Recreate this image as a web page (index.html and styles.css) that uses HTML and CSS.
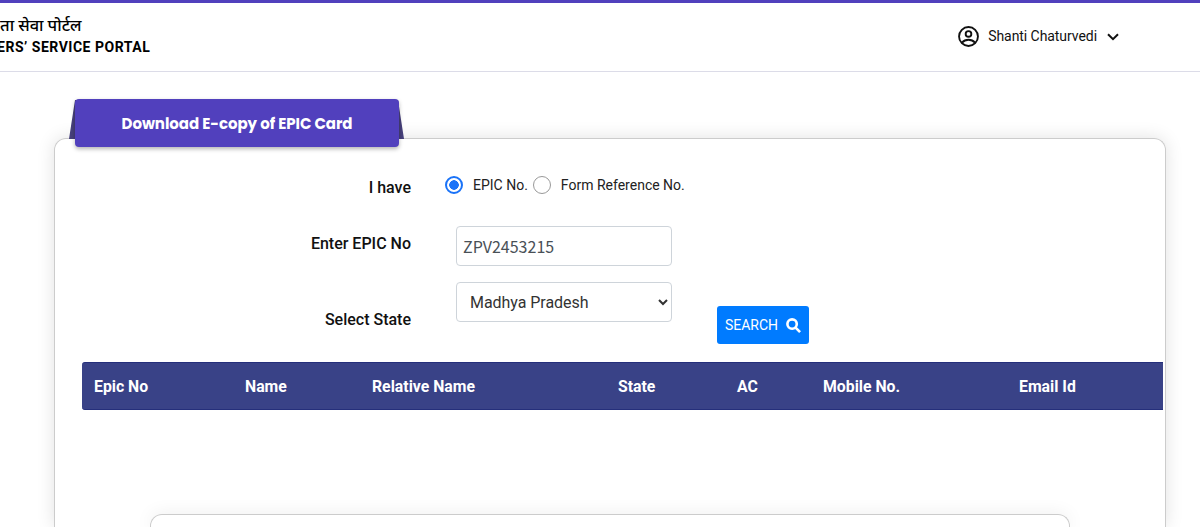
FILE: index.html
```
<!DOCTYPE html>
<html lang="en">
    <head>
        <meta charset="utf-8">
        <title>Voters' Service Portal</title>

        <link rel="stylesheet" href="styles.css">
    </head>

    <body>
        <header class="header">
            <div class="brand">
                <div class="brand-hindi" lang="hi">ता सेवा पोर्टल</div>
                <div class="brand-english">ERS’ SERVICE PORTAL</div>
            </div>

            <div class="user">
                <svg class="user-icon" viewBox="0 0 20 20" fill="none" stroke="#111" stroke-width="1.8">
                    <circle cx="10" cy="10" r="9"/>
                    <circle cx="10" cy="7.6" r="2.7"/>
                    <path d="M3.8 15.8C5.5 13.9 7.6 13.1 10 13.1s4.5 .8 6.2 2.7"/>
                </svg>
                <span class="user-name">Shanti Chaturvedi</span>
                <svg class="user-arrow" viewBox="0 0 12 8" fill="none" stroke="#111" stroke-width="2">
                    <path d="M1 1.2l5 5 5-5"/>
                </svg>
            </div>
        </header>

        <main class="card">
            <div class="ribbon">
                <h1 class="ribbon-title">Download E-copy of EPIC Card</h1>
            </div>

            <form class="form">
                <div class="form-row row-type">
                    <span class="form-label">I have</span>
                    <div class="radios">
                        <input class="radio" type="radio" name="type" id="epic" checked>
                        <label class="radio-label" for="epic">EPIC No.</label>
                        <input class="radio" type="radio" name="type" id="reference">
                        <label class="radio-label" for="reference">Form Reference No.</label>
                    </div>
                </div>

                <div class="form-row row-epic">
                    <label class="form-label" for="epic-no">Enter EPIC No</label>
                    <input class="field" type="text" id="epic-no" value="ZPV2453215">
                </div>

                <div class="form-row row-state">
                    <label class="form-label" for="state">Select State</label>
                    <select class="field select" id="state">
                        <option>Madhya Pradesh</option>
                    </select>
                    <button class="search-btn" type="button">
                        SEARCH
                        <svg class="search-icon" viewBox="0 0 16 16" fill="none" stroke="white" stroke-width="2.8">
                            <circle cx="6.5" cy="6.5" r="5"/>
                            <path d="M10.2 10.2l4.8 4.8"/>
                        </svg>
                    </button>
                </div>
            </form>

            <div class="table-head">
                <span>Epic No</span>
                <span>Name</span>
                <span>Relative Name</span>
                <span>State</span>
                <span>AC</span>
                <span>Mobile No.</span>
                <span>Email Id</span>
            </div>

            <div class="panel"></div>
        </main>
    </body>
</html>
```
FILE: styles.css
```
* {
    box-sizing: border-box;
}

body {
    margin: 0;
    height: 527px;
    overflow: hidden;

    font-family: Roboto, "Noto Sans", sans-serif;
    color: #111;
    background-color: white;
}

.header {
    display: flex;
    justify-content: space-between;
    height: 72px;

    border-top: 3px solid #5140bd;
    border-bottom: 1px solid #dcdce8;
}

.brand {
    padding-top: 11px;
    white-space: nowrap;
    color: black;
}

.brand-hindi {
    height: 23px;
    font-size: 16.5px;
    font-weight: 500;
    line-height: 23px;
}

.brand-english {
    margin-left: -3px;
    font-size: 14px;
    font-weight: 700;
    line-height: 21px;
    letter-spacing: 0.52px;
}

.user {
    display: flex;
    align-items: center;
    height: 66px;
    margin-right: 81px;
}

.user-icon {
    width: 21px;
    height: 21px;
    margin-top: 1px;
}

.user-name {
    margin: 0 10px 0 9px;
    font-size: 14px;
    letter-spacing: -0.06px;
}

.user-arrow {
    width: 12px;
    height: 8px;
    margin-top: 1px;
}

.card {
    display: flex;
    flex-direction: column;
    width: 1112px;
    height: 389px;
    margin: 66px 0 0 54px;

    border: 1px solid #ccc;
    border-bottom: none;
    border-radius: 12px 12px 0 0;
    box-shadow: 0 0 18px rgba(0, 0, 0, 0.12);
}

.ribbon {
    position: relative;
    width: 324px;
    height: 48px;
    margin: -40px 0 0 20px;
}

/* folded edges behind the title */
.ribbon::before {
    content: "";
    position: absolute;
    top: 1px;
    left: -6px;
    width: 335px;
    height: 39px;

    background-color: #47407b;
    clip-path: polygon(6px 0, 329px 0, 335px 39px, 0 39px);
}

.ribbon-title {
    position: relative;
    height: 48px;
    margin: 0;

    font-family: Poppins, Inter, sans-serif;
    font-size: 15px;
    font-weight: 700;
    line-height: 49px;
    letter-spacing: -0.05px;
    text-align: center;

    color: white;
    background-color: #5140bd;
    border-radius: 4px;
    box-shadow: 0 2px 4px rgba(0, 0, 0, 0.3);
}

.form-row {
    display: flex;
    align-items: flex-start;
}

.form-label {
    width: 356px;
    font-size: 16px;
    font-weight: 500;
    line-height: 20px;
    text-align: right;
}

.row-type {
    height: 79px;
    padding-top: 27px;
}

.row-type .form-label {
    padding-top: 4px;
}

.radios {
    display: flex;
    align-items: center;
    height: 22px;
    margin-left: 34px;
}

.radio {
    appearance: none;
    width: 18px;
    height: 18px;
    margin: 0 10px 0 0;

    border: 1.5px solid #999;
    border-radius: 50%;
}

.radio:checked {
    border: 2px solid #1a73f8;
    background: radial-gradient(circle, #1a73f8 4.5px, white 5px);
}

.radio-label {
    margin-right: 5px;
    font-size: 14px;
    color: #222;
}

.row-epic {
    height: 56px;
}

.row-epic .form-label {
    padding-top: 8px;
}

.field {
    width: 216px;
    height: 40px;
    margin-left: 45px;
    padding: 0 6px;

    font-family: "Noto Sans CJK SC", sans-serif;
    font-size: 16px;
    color: #495057;
    background-color: white;
    border: 1px solid #ced4da;
    border-radius: 4px;
}

.select {
    padding: 0 0 0 9px;
    font-family: Roboto, sans-serif;
    font-size: 16px;
    letter-spacing: -0.05px;
    color: #333;
}

.row-state {
    height: 80px;
}

.row-state .form-label {
    padding-top: 28px;
}

.search-btn {
    display: flex;
    align-items: center;
    justify-content: center;
    gap: 8px;
    width: 92px;
    height: 38px;
    margin: 24px 0 0 45px;
    padding: 0;

    font-family: Roboto, sans-serif;
    font-size: 14px;
    color: white;
    background-color: #007bff;
    border: none;
    border-radius: 3px;
}

.search-icon {
    width: 15px;
    height: 15px;
}

.table-head {
    display: grid;
    grid-template-columns: 151px 127px 246px 119px 86px 196px 1fr;
    align-items: center;
    width: 1081px;
    height: 48px;
    margin-left: 27px;
    padding-left: 12px;

    font-size: 15.8px;
    font-weight: 700;
    color: white;
    background-color: #394287;
    border: solid #252f7b;
    border-width: 1px 0;
    border-radius: 3px 0 0 3px;
}

.panel {
    flex: 1;
    width: 920px;
    margin: 104px 0 0 95px;

    border: 1px solid #ccc;
    border-bottom: none;
    border-radius: 12px 12px 0 0;
    box-shadow: 0 0 18px rgba(0, 0, 0, 0.08);
}
```
